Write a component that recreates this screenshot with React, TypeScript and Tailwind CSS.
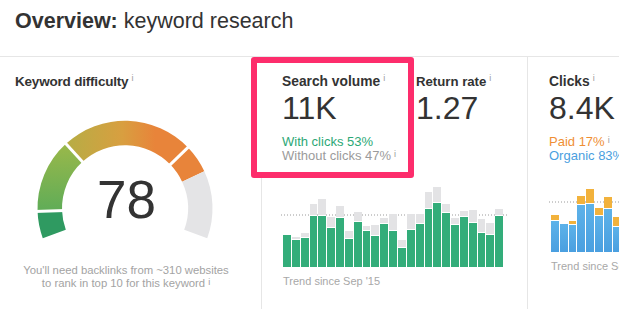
import React from 'react'

const volumeBars: [number, number][] = [
  [31.7, 33.3], [27, 29.7], [28.7, 34], [51, 62.7], [51, 67.7], [39, 50], [49, 60.7], [28, 35.7],
  [45.3, 54.7], [36, 40.7], [31, 42], [43, 48.7], [36, 53], [19, 26.7], [37, 53], [43, 53],
  [57.7, 74.7], [64, 80], [53.7, 62.7], [42, 48.7], [49.7, 55.7], [44, 56.7], [34, 47.7], [32, 43.7],
  [51, 57.7],
]

const clickBars: [number, number][] = [
  [31, 36.7], [28, 28], [27, 30.7], [47, 55.7], [48, 62.7], [36, 43.7], [43, 54.7], [25, 34.7],
  [40, 48], [33, 38], [29, 35], [35, 41], [30, 38], [22, 27], [33, 40], [38, 45],
  [50, 58], [55, 66], [46, 52], [36, 42], [42, 49], [38, 45], [30, 36], [28, 33], [44, 50],
]

const cx = 125
const cy = 118.3
const R = 87.5
const r = 63

function pt(rad: number, a: number) {
  const t = (a * Math.PI) / 180
  return [cx + rad * Math.cos(t), cy - rad * Math.sin(t)]
}

function sector(a1: number, a2: number) {
  const [x1, y1] = pt(R, a1)
  const [x2, y2] = pt(R, a2)
  const [x3, y3] = pt(r, a2)
  const [x4, y4] = pt(r, a1)
  return `M${x1} ${y1} A${R} ${R} 0 0 1 ${x2} ${y2} L${x3} ${y3} A${r} ${r} 0 0 0 ${x4} ${y4} Z`
}

function Gap({ a }: { a: number }) {
  const [x1, y1] = pt(r - 3, a)
  const [x2, y2] = pt(R + 3, a)
  return <line x1={x1} y1={y1} x2={x2} y2={y2} stroke="#fff" strokeWidth={3} />
}

function Info() {
  return <span className="ml-[3px] inline-block align-top text-[9px] font-normal leading-[10px] text-[#9a9a9a]">i</span>
}

function Gauge() {
  return (
    <svg width={261} height={160} viewBox="0 0 261 160" className="block">
      <defs>
        <linearGradient id="greenGrad" gradientUnits="userSpaceOnUse" x1="0" y1="118" x2="0" y2="55">
          <stop offset="0" stopColor="#62ad57" />
          <stop offset="1" stopColor="#99b84a" />
        </linearGradient>
        <linearGradient id="topGrad" gradientUnits="userSpaceOnUse" x1="66" y1="0" x2="190" y2="0">
          <stop offset="0" stopColor="#b6ad45" />
          <stop offset="0.45" stopColor="#d89f40" />
          <stop offset="0.72" stopColor="#e8843a" />
        </linearGradient>
      </defs>
      <path d={sector(200, 182)} fill="#2f9a61" />
      <path d={sector(182, 132.5)} fill="url(#greenGrad)" />
      <path d={sector(132.5, 44)} fill="url(#topGrad)" />
      <path d={sector(44, 25)} fill="#e8843a" />
      <path d={sector(25, -20)} fill="#e4e4e6" />
      <Gap a={182} />
      <Gap a={132.5} />
      <Gap a={44} />
      <text x={126.5} y={127.7} textAnchor="middle" fontSize={53} fill="#333">
        78
      </text>
    </svg>
  )
}

function DottedLine({ top }: { top: string }) {
  return (
    <svg className={`absolute -left-[2px] ${top}`} width={226} height={2}>
      <line x1={0} y1={1} x2={226} y2={1} stroke="#9a9a9a" strokeWidth={1} strokeDasharray="1 2" />
    </svg>
  )
}

export default function App() {
  return (
    <div className="h-[313px] w-full overflow-hidden bg-white font-['Liberation_Sans',Arial,sans-serif] text-[#333]">
      <div className="h-[57px] border-b border-[#e6e6e6] pl-[15px] pt-[11px] text-[21.5px] leading-none">
        <span className="font-bold">Overview:</span> keyword research
      </div>

      <div className="flex h-[252px]">
        {/* difficulty */}
        <div className="w-[261px] shrink-0 pt-[16px]">
          <div className="pl-[15px] text-[13.5px] font-bold leading-[17px] tracking-[-0.2px]">
            Keyword difficulty
            <Info />
          </div>
          <Gauge />
          <div className="ml-[15px] mt-[14px] w-[222px] text-center text-[11.3px] leading-[13px] text-[#a3a3a3]">
            You'll need backlinks from ~310 websites
            <br />
            to rank in top 10 for this keyword
            <Info />
          </div>
        </div>

        {/* volume + return rate */}
        <div className="w-[266px] shrink-0 border-l border-[#e6e6e6] pl-[21px]">
          <div className="flex items-start">
            <div className="relative z-10 ml-[-32px] h-[121px] w-[163px] shrink-0 rounded-[3px] border-[6px] border-[#fd2d6c] bg-white pl-[25px] pt-[10px]">
              <div className="text-[13.8px] font-bold leading-[17px]">
                Search volume
                <Info />
              </div>
              <div className="text-[32px] leading-[36px]">11K</div>
              <div className="mt-[9px] text-[13px] leading-[14px] text-[#2ca876]">With clicks 53%</div>
              <div className="text-[13px] leading-[14px] text-[#9b9b9b]">
                Without clicks 47%
                <Info />
              </div>
            </div>
            <div className="ml-[2px] pt-[16px]">
              <div className="whitespace-nowrap text-[13.2px] font-bold leading-[17px]">
                Return rate
                <Info />
              </div>
              <div className="text-[32px] leading-[36px]">1.27</div>
            </div>
          </div>
          <div className="relative mt-[9px] flex h-[80px] w-[220px] items-end gap-[1px]">
            <DottedLine top="top-[27px]" />
            {volumeBars.map(([g, t], i) => (
              <div key={i} className="relative flex flex-1 flex-col">
                <div className="bg-[#e3e3e5]" style={{ height: Math.max(t - g - 1, 0) }} />
                {t - g > 1 && <div className="h-[1px] bg-white" />}
                <div className="bg-[#33ad7a]" style={{ height: g }} />
              </div>
            ))}
          </div>
          <div className="mt-[7px] text-[11px] leading-[14px] text-[#a8a8a8]">Trend since Sep '15</div>
        </div>

        {/* clicks */}
        <div className="min-w-0 flex-1 overflow-hidden border-l border-[#e6e6e6] pl-[21px] pt-[16px]">
          <div className="whitespace-nowrap text-[13.8px] font-bold leading-[17px]">
            Clicks
            <Info />
          </div>
          <div className="whitespace-nowrap text-[32px] leading-[36px]">8.4K</div>
          <div className="mt-[9px] whitespace-nowrap text-[13px] leading-[14px] text-[#ef8f34]">
            Paid 17%
            <Info />
          </div>
          <div className="whitespace-nowrap text-[13px] leading-[14px] text-[#4aa0e0]">Organic 83%</div>
          <div className="relative ml-[2px] mt-[9px] flex h-[80px] w-[220px] items-end gap-[1px]">
            <DottedLine top="top-[29px]" />
            {clickBars.map(([b, t], i) => (
              <div key={i} className="relative flex w-[7.84px] shrink-0 flex-col">
                <div className="bg-[#f2b23c]" style={{ height: Math.max(t - b - 1, 0) }} />
                {t - b > 1 && <div className="h-[1px] bg-white" />}
                <div className="bg-linear-to-b from-[#5db2e9] to-[#4a9fe0]" style={{ height: b }} />
              </div>
            ))}
          </div>
          <div className="ml-[2px] mt-[7px] whitespace-nowrap text-[11px] leading-[14px] text-[#a8a8a8]">
            Trend since Sep '15
          </div>
        </div>
      </div>
    </div>
  )
}
